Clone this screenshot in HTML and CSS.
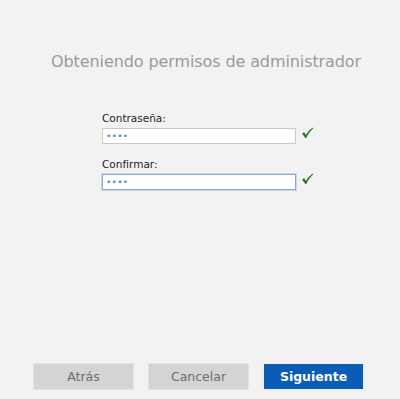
FILE: index.html
```html
<!DOCTYPE html>
<html lang="es">
<head>
<meta charset="utf-8">
<link rel="stylesheet" href="styles.css">
</head>
<body>
<div class="page">
  <h1 class="title">Obteniendo permisos de administrador</h1>
  <form class="form">
    <div class="field">
      <label class="label">Contraseña:</label>
      <div class="row">
        <div class="input"><span class="dots">••••</span></div>
        <svg class="check" width="13" height="12" viewBox="0 0 13 12"><path d="M1 6.5 L3.2 5.2 L5 8 C7 4.5 9 2.2 12 0.5 L12.3 1.2 C9.5 3.5 7.2 6.8 5.3 11 L4.4 11 Z" fill="#1d7a2e"/></svg>
      </div>
    </div>
    <div class="field">
      <label class="label">Confirmar:</label>
      <div class="row">
        <div class="input focused"><span class="dots">••••</span></div>
        <svg class="check" width="13" height="12" viewBox="0 0 13 12"><path d="M1 6.5 L3.2 5.2 L5 8 C7 4.5 9 2.2 12 0.5 L12.3 1.2 C9.5 3.5 7.2 6.8 5.3 11 L4.4 11 Z" fill="#1d7a2e"/></svg>
      </div>
    </div>
  </form>
  <div class="spacer"></div>
  <div class="buttons">
    <button class="btn" type="button">Atrás</button>
    <button class="btn" type="button">Cancelar</button>
    <button class="btn primary" type="button">Siguiente</button>
  </div>
</div>
</body>
</html>
```

FILE: styles.css
```css
html, body {
  margin: 0;
  padding: 0;
  background: #f2f2f2;
}
.page {
  width: 400px;
  height: 399px;
  display: flex;
  flex-direction: column;
  font-family: "DejaVu Sans", "Liberation Sans", sans-serif;
}
.title {
  margin: 52px 0 0 0;
  padding-left: 12px;
  font-size: 16px;
  font-weight: normal;
  color: #9a9a9a;
  text-align: center;
  letter-spacing: -0.1px;
  line-height: 20px;
}
.form {
  margin: 40px 0 0 102px;
  display: flex;
  flex-direction: column;
  gap: 14px;
}
.label {
  display: block;
  font-size: 10.5px;
  color: #222;
  line-height: 12px;
  margin-bottom: 4px;
}
.row {
  display: flex;
  align-items: center;
  gap: 5px;
}
.input {
  box-sizing: border-box;
  width: 194px;
  height: 16px;
  background: #fff;
  border: 1px solid #c9c9c9;
  display: flex;
  align-items: center;
  padding-left: 3px;
}
.input.focused {
  border-color: #8aa9cc;
  box-shadow: 0 0 0 1px #c9d8ea;
}
.dots {
  color: #4a8fd6;
  font-size: 9px;
  letter-spacing: 0.3px;
  line-height: 8px;
}
.check {
  margin-top: -6px;
}
.spacer {
  flex: 1;
}
.buttons {
  display: flex;
  gap: 14px;
  margin: 0 0 9px 33px;
}
.btn {
  width: 101px;
  height: 27px;
  border: 1px solid #e2e2e2;
  background: #d4d4d4;
  color: #6d6d6d;
  font-family: "DejaVu Sans", "Liberation Sans", sans-serif;
  font-size: 12.5px;
  padding: 0;
}
.btn.primary {
  background: #0b5cb5;
  border-color: #e8eef6;
  color: #fff;
  font-weight: bold;
}
```
